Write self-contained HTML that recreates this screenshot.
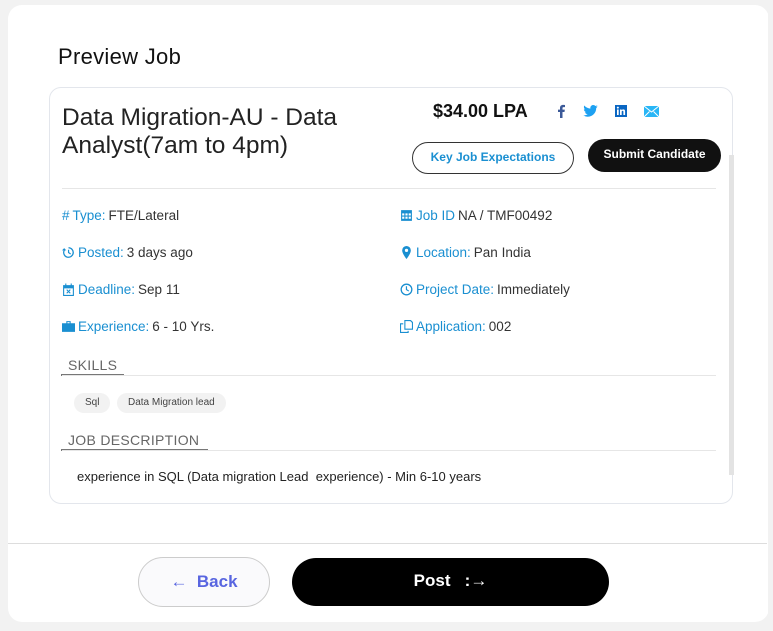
<!DOCTYPE html>
<html><head><meta charset="utf-8"><style>
*{box-sizing:border-box;margin:0;padding:0}
body{width:773px;height:631px;background:#f2f2f2;font-family:"Liberation Sans",sans-serif;position:relative;overflow:hidden}
.panel{position:absolute;left:8px;top:5px;width:761px;height:617px;background:#fff;border-radius:14px}
.rs{position:absolute;left:768px;top:0;width:5px;height:631px;background:#f2f2f2}
h1{position:absolute;left:58px;top:44px;font-size:22px;font-weight:normal;color:#111;letter-spacing:.3px}
.card{position:absolute;left:49px;top:87px;width:684px;height:417px;border:1px solid #e3e6ec;border-radius:12px;background:#fff}
.title{position:absolute;left:12px;top:16px;font-size:24.5px;line-height:28px;color:#222;width:360px}
.price{position:absolute;left:383px;top:13px;font-size:18px;color:#111;font-weight:bold}
.soc{position:absolute;top:16px}
.kje{position:absolute;left:362px;top:54px;width:162px;height:32px;border:1.5px solid #333;border-radius:16px;color:#1a8fd1;font-size:12px;text-align:center;line-height:29px;font-weight:bold}
.sub{position:absolute;left:538px;top:51px;width:133px;height:33px;background:#111;border-radius:17px;color:#fff;font-size:12px;text-align:center;line-height:31px;font-weight:bold}
.hr{position:absolute;left:12px;width:654px;height:1px;background:#e6e6e6}
.f{position:absolute;font-size:13.5px;color:#333;display:flex;align-items:center;gap:3px}
.f b{font-weight:normal;color:#1a8fd1}
.f svg{width:13px;height:13px;fill:#1a8fd1}
.sec{position:absolute;left:18px;font-size:14px;color:#666;letter-spacing:.3px}
.ul{position:absolute;left:11px;height:2px;background:#777}
.tag{position:absolute;top:305px;height:20px;background:#f2f2f2;border-radius:10px;font-size:10px;color:#444;line-height:20px;padding:0 11px}
.desc{position:absolute;left:27px;top:381px;font-size:13px;color:#222}
.sb{position:absolute;left:729px;top:155px;width:5px;height:320px;background:#e3e3e3}
.sep{position:absolute;left:8px;top:543px;width:759px;height:1px;background:#ddd}
.back{position:absolute;left:138px;top:557px;width:132px;height:50px;border:1px solid #ccc;border-radius:25px;background:#fafafc;color:#5865e0;font-size:17px;font-weight:bold;text-align:center;line-height:48px}
.post{position:absolute;left:292px;top:558px;width:317px;height:48px;background:#000;border-radius:24px;color:#fff;font-size:17px;font-weight:bold;text-align:center;line-height:46px}
</style></head><body>
<div class="panel"></div><div class="rs"></div>
<h1>Preview Job</h1>
<div class="card">
<div class="title">Data Migration-AU - Data Analyst(7am to 4pm)</div>
<div class="price">$34.00 LPA</div>
<svg class="soc" style="left:506px" width="10" height="14" viewBox="0 0 10 14"><path d="M6.5 14V8h2l.3-2.4H6.5V4.2c0-.7.2-1.1 1.1-1.1H9V1C8.7 1 8 .9 7.1.9 5.2.9 4 2 4 4v1.6H2V8h2v6z" fill="#3b5998"/></svg>
<svg class="soc" style="left:533px;top:17px" width="15" height="12" viewBox="0 0 24 20"><path d="M24 2.4c-.9.4-1.8.6-2.8.8 1-.6 1.8-1.6 2.2-2.7-1 .6-2 1-3.1 1.2C19.3.7 18 0 16.6 0c-2.7 0-4.9 2.2-4.9 4.9 0 .4 0 .8.1 1.1C7.7 5.8 4.1 3.9 1.7.9c-.4.7-.7 1.6-.7 2.5 0 1.7.9 3.2 2.2 4.1-.8 0-1.6-.2-2.200-.6v.1c0 2.4 1.7 4.4 3.9 4.8-.4.1-.8.2-1.3.2-.3 0-.6 0-.9-.1.6 2 2.4 3.4 4.6 3.4-1.7 1.3-3.8 2.1-6.1 2.1-.4 0-.8 0-1.2-.1 2.2 1.4 4.8 2.2 7.5 2.2 9.1 0 14-7.5 14-14v-.6c1-.7 1.8-1.6 2.5-2.5z" fill="#1da1f2"/></svg>
<svg class="soc" style="left:565px;top:17px" width="12" height="12" viewBox="0 0 12 12"><rect width="12" height="12" fill="#0a66c2"/><rect x="2" y="4.5" width="1.7" height="5.5" fill="#fff"/><circle cx="2.85" cy="2.6" r="1" fill="#fff"/><path d="M5 4.5h1.6v.8c.3-.5.9-.9 1.7-.9 1.4 0 1.8.9 1.8 2.2V10H8.4V7c0-.7-.1-1.2-.8-1.2S6.7 6.3 6.7 7v3H5z" fill="#fff"/></svg>
<svg class="soc" style="left:594px;top:18px" width="15" height="11" viewBox="0 0 15 11"><rect width="15" height="11" fill="#29b6f6"/><path d="M0 0l7.5 6L15 0M0 11l5.5-5.5M15 11L9.5 5.5" stroke="#fff" stroke-width="1" fill="none"/></svg>
<div class="kje">Key Job Expectations</div>
<div class="sub">Submit Candidate</div>
<div class="hr" style="top:100px"></div>
<div class="f" style="left:12px;top:120px"><b>#</b><b>Type:</b> FTE/Lateral</div>
<div class="f" style="left:12px;top:157px"><svg viewBox="0 0 12 12"><path d="M6 1a5 5 0 1 1-4.6 3H0L2 2l2 2H2.7A3.8 3.8 0 1 0 6 2.2zM5.5 3.5h1.1v2.3l1.7 1.1-.6.9-2.2-1.4z"/></svg><b>Posted:</b> 3 days ago</div>
<div class="f" style="left:12px;top:194px"><svg viewBox="0 0 12 12"><path d="M1 2h2V.5h1V2h4V.5h1V2h2v10H1zm1 3v6h8V5zm2 1.5l.7-.7L6 7.1l1.3-1.3.7.7L6.7 7.8 8 9.1l-.7.7L6 8.5 4.7 9.8 4 9.1l1.3-1.3z"/></svg><b>Deadline:</b> Sep 11</div>
<div class="f" style="left:12px;top:231px"><svg viewBox="0 0 12 12"><path d="M4 1h4v2h4v8H0V3h4zm1 1v1h2V2zM0 6.5h5v1h2v-1h5v1H0z"/></svg><b>Experience:</b> 6 - 10 Yrs.</div>
<div class="f" style="left:350px;top:120px"><svg viewBox="0 0 12 12"><path d="M1 1h10v10H1zm1 3v2h2V4zm3 0v2h2V4zm3 0v2h2V4zM2 7v2h2V7zm3 0v2h2V7zm3 0v2h2V7z"/></svg><b>Job ID</b> NA / TMF00492</div>
<div class="f" style="left:350px;top:157px"><svg viewBox="0 0 12 12"><path d="M6 0a4 4 0 0 1 4 4c0 3-4 8-4 8S2 7 2 4a4 4 0 0 1 4-4zm0 2.5a1.5 1.5 0 1 0 0 3 1.5 1.5 0 0 0 0-3z"/></svg><b>Location:</b> Pan India</div>
<div class="f" style="left:350px;top:194px"><svg viewBox="0 0 12 12"><path d="M6 .5a5.5 5.5 0 1 1 0 11 5.5 5.5 0 0 1 0-11zm0 1.2a4.3 4.3 0 1 0 0 8.6 4.3 4.3 0 0 0 0-8.6zM5.4 3h1.1v2.8l1.9 1.2-.6.9-2.4-1.5z"/></svg><b>Project Date:</b> Immediately</div>
<div class="f" style="left:350px;top:231px"><svg viewBox="0 0 12 12"><path d="M4 0h6l2 2v7H4zm1 1v7h6V2.5L9.5 1zM0 3h3v1H1v7h6v-1h1v2H0z"/></svg><b>Application:</b> 002</div>
<div class="sec" style="top:269px">SKILLS</div>
<div class="ul" style="top:286px;width:63px"></div>
<div class="hr" style="top:287px"></div>
<div class="tag" style="left:24px">Sql</div>
<div class="tag" style="left:67px">Data Migration lead</div>
<div class="sec" style="top:344px">JOB DESCRIPTION</div>
<div class="ul" style="top:361px;width:147px"></div>
<div class="hr" style="top:362px"></div>
<div class="desc">experience in SQL (Data migration Lead&nbsp; experience) - Min 6-10 years</div>
</div>
<div class="sb"></div>
<div class="sep"></div>
<div class="back">&#8592;&nbsp; Back</div>
<div class="post">Post &nbsp; :&#8594;</div>
</body></html>
